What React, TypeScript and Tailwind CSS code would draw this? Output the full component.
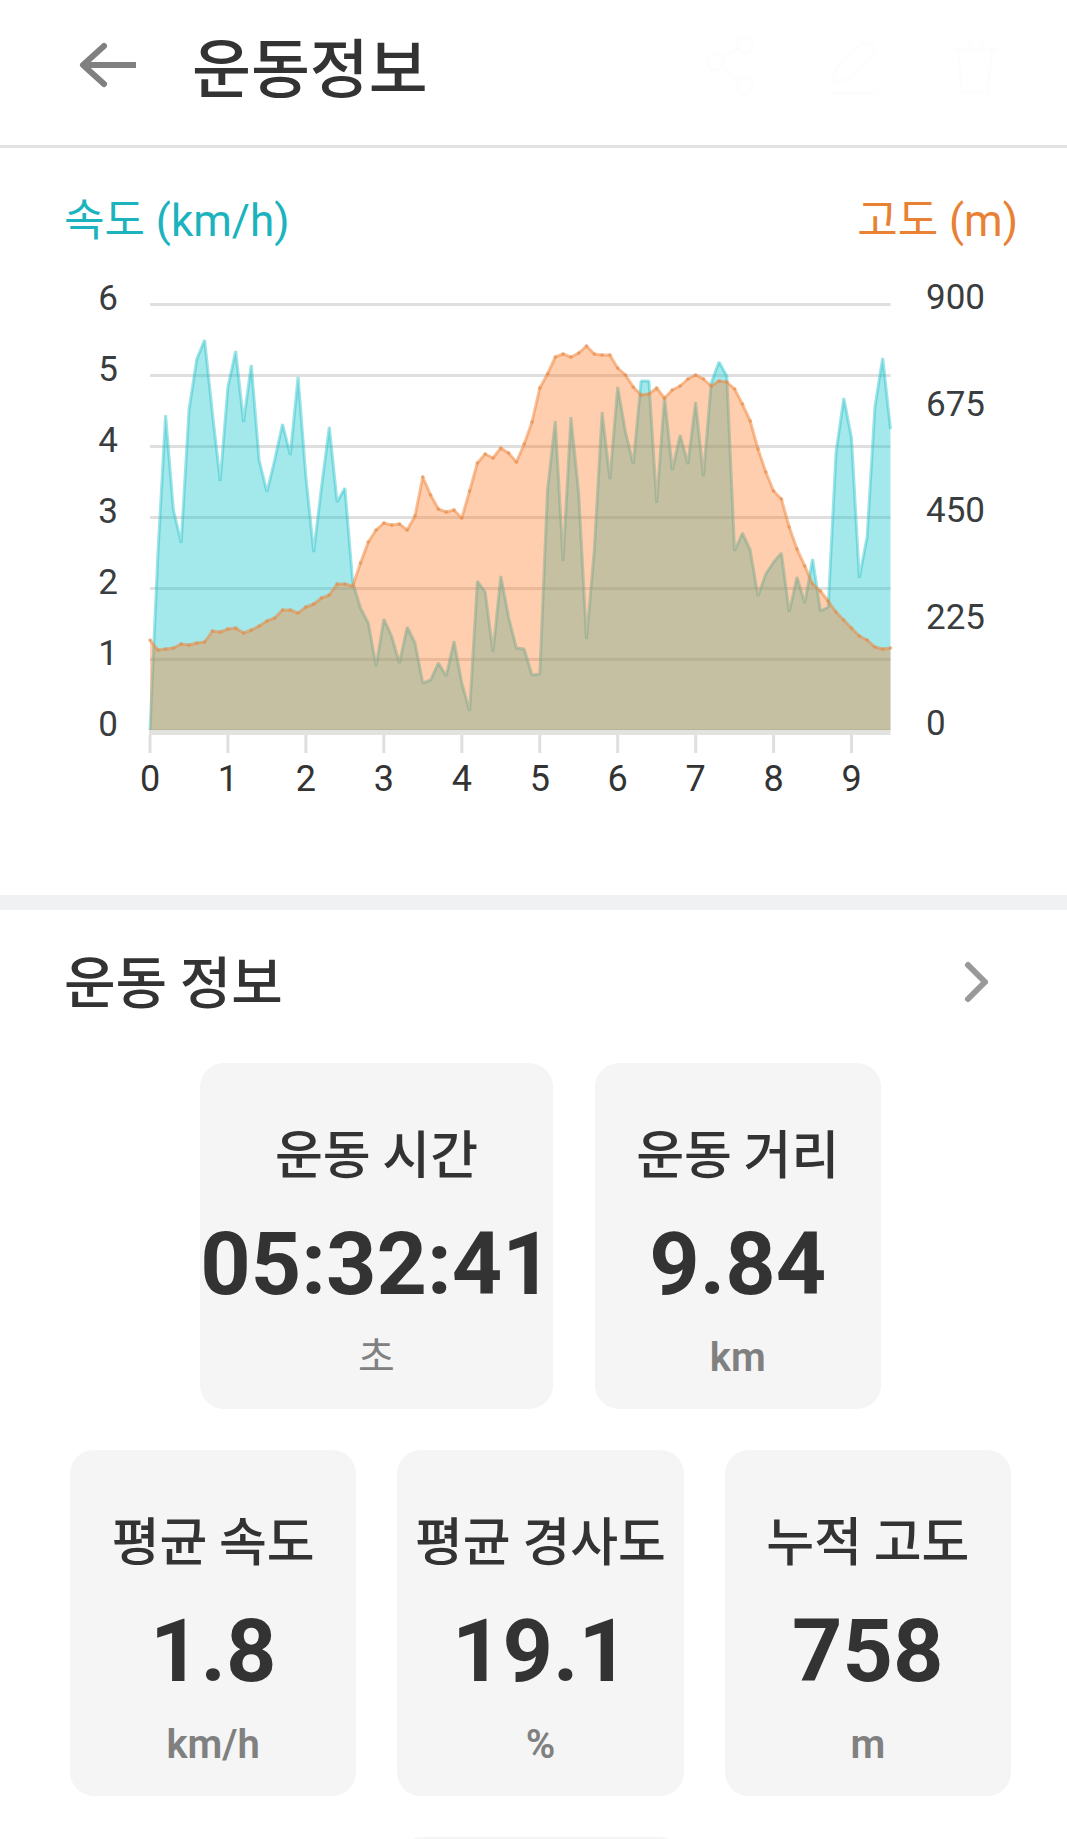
import type { ReactNode } from "react";

const X0 = 150;
const STEP = 7.795;
const BASE = 730;
const UNIT = 71;

// Vertical positions in chart units, one sample for every 100 m.
const speed = [
  730, 556, 415, 510, 543, 410, 359, 340, 413, 481, 387, 351, 422, 365, 460, 492, 460, 424, 455, 377,
  477, 552, 487, 427, 502, 488, 582, 608, 623, 666, 619, 636, 663, 627, 643, 683, 680, 663, 676, 641,
  683, 711, 581, 592, 652, 576, 617, 648, 649, 675, 674, 490, 421, 561, 417, 493, 639, 550, 412, 479,
  387, 432, 464, 381, 381, 503, 397, 470, 435, 464, 402, 476, 383, 362, 376, 551, 533, 550, 596, 574,
  562, 553, 612, 577, 603, 559, 611, 607, 453, 398, 438, 578, 537, 407, 358, 429,
];
const altitude = [
  640, 650, 649, 648, 644, 645, 643, 642, 631, 632, 629, 628, 633, 630, 626, 621, 618, 610, 610, 613,
  607, 604, 598, 595, 584, 584, 586, 563, 542, 530, 523, 525, 524, 530, 516, 477, 495, 509, 512, 510,
  518, 491, 463, 454, 458, 448, 453, 462, 444, 422, 388, 374, 357, 354, 357, 353, 346, 354, 355, 355,
  368, 375, 387, 395, 394, 388, 398, 390, 386, 379, 375, 379, 386, 381, 382, 389, 404, 421, 449, 472,
  491, 499, 527, 549, 566, 584, 591, 601, 612, 620, 628, 636, 640, 647, 649, 648,
];

const xAt = (i: number) => X0 + i * STEP;
const toPoints = (values: number[]) => values.map((y, i) => `${xAt(i).toFixed(1)},${y}`).join(" ");
const toArea = (values: number[]) =>
  `${X0},${BASE} ${toPoints(values)} ${xAt(values.length - 1).toFixed(1)},${BASE}`;

const END = xAt(speed.length - 1);

function Chart() {
  return (
    <svg
      viewBox="0 270 1067 540"
      className="block w-full font-[Roboto,sans-serif]"
      role="img"
      aria-label="속도와 고도 그래프"
    >
      {[1, 2, 3, 4, 5, 6].map((n) => (
        <rect key={n} x={X0} y={BASE - n * UNIT - 1} width={END - X0} height="3" fill="#dfdfdf" />
      ))}
      <rect x={X0 - 1} y="729" width={END - X0 + 1} height="6" fill="#e2e2e0" />
      {[0, 1, 2, 3, 4, 5, 6, 7, 8, 9].map((n) => (
        <rect key={n} x={xAt(n * 10) - 1.5} y="735" width="3" height="18" fill="#dfdfdf" />
      ))}
      <polygon points={toArea(speed)} fill="#0dc5cb" fillOpacity="0.38" />
      <polyline points={toPoints(speed)} fill="none" stroke="#1fbfc8" strokeOpacity="0.42" strokeWidth="3" strokeLinejoin="bevel" />
      <polygon points={toArea(altitude)} fill="#ff761e" fillOpacity="0.36" />
      <polyline points={toPoints(altitude)} fill="none" stroke="#f08437" strokeOpacity="0.5" strokeWidth="3" strokeLinejoin="round" />
      {altitude.map((y, i) => (
        <circle key={i} cx={xAt(i)} cy={y} r="1.8" fill="#e58a4a" fillOpacity="0.6" />
      ))}
      <g fill="#3a3d40" fontSize="35">
        {[0, 1, 2, 3, 4, 5, 6].map((n) => (
          <text key={n} x="108" y={736 - n * UNIT} textAnchor="middle">
            {n}
          </text>
        ))}
        {[0, 225, 450, 675, 900].map((n) => (
          <text key={n} x="926" y={735 - (n / 225) * 106.5}>
            {n}
          </text>
        ))}
      </g>
      <g fill="#333333" fontSize="36">
        {[0, 1, 2, 3, 4, 5, 6, 7, 8, 9].map((n) => (
          <text key={n} x={xAt(n * 10)} y="791" textAnchor="middle">
            {n}
          </text>
        ))}
      </g>
    </svg>
  );
}

function Stat({ label, value, unit }: { label: string; value: string; unit: string }) {
  return (
    <article className="flex h-[346px] min-w-[286px] flex-col items-center rounded-3xl bg-[#f5f5f5] pt-[53px] whitespace-nowrap">
      <h3 className="text-[52px] leading-[72px] font-medium text-[#333]">{label}</h3>
      <p className="mt-5 font-[Roboto,sans-serif] text-[88px] leading-[112px] font-bold text-[#333]">{value}</p>
      <p className="mt-2.5 font-[Roboto,'Noto_Sans_CJK_KR',sans-serif] text-[40px] leading-[56px] font-semibold text-[#808080]">
        {unit === "초" ? <span className="font-normal">{unit}</span> : unit}
      </p>
    </article>
  );
}

function IconButton({ label, children }: { label: string; children: ReactNode }) {
  return (
    <button type="button" aria-label={label} className="text-[#fdfdfd]">
      <svg viewBox="0 0 60 60" className="size-[60px]" fill="none" stroke="currentColor" strokeWidth="3" strokeLinecap="round" strokeLinejoin="round">
        {children}
      </svg>
    </button>
  );
}

export default function App() {
  return (
    <main className="h-screen overflow-hidden bg-white font-['Noto_Sans_CJK_KR',sans-serif] text-[#333]">
      <header className="flex h-[148px] items-start border-b-3 border-[#e2e2e2] pr-[60px] pl-[78px]">
        <button type="button" aria-label="뒤로" className="mt-[40px]">
          <svg viewBox="0 0 60 50" className="h-[50px] w-[60px]" fill="none" stroke="#808080" strokeWidth="6">
            <path d="M58 25H6" />
            <path d="M26 6 5 25l21 19" strokeLinecap="round" strokeLinejoin="round" />
          </svg>
        </button>
        <h1 className="mt-5 ml-[54px] text-[64px] leading-[88px] font-medium">운동정보</h1>
        <div className="mt-[36px] ml-auto flex gap-[62px]">
          <IconButton label="공유">
            <circle cx="42" cy="9" r="8" />
            <circle cx="12" cy="26" r="8" />
            <circle cx="42" cy="50" r="8" />
            <path d="m19 22 16-9M19 31l16 13" />
          </IconButton>
          <IconButton label="편집">
            <path d="M8 57h44M8 46l3-13L36 8q6-4 11 1t1 11L22 44Z" />
          </IconButton>
          <IconButton label="삭제">
            <path d="M5 13h46M11 13l4 43h26l4-43M21 12q0-8 8-8t8 8" />
          </IconButton>
        </div>
      </header>

      <section>
        <div className="flex h-[122px] items-center justify-between pt-6 pr-[49px] pl-[64px] font-[Roboto,'Noto_Sans_CJK_KR',sans-serif] text-[44px] leading-[64px]">
          <span className="text-[#1bb3bd]">속도 (km/h)</span>
          <span className="text-[#e98135]">고도 (m)</span>
        </div>
        <Chart />
      </section>

      <section className="mt-[85px] border-t-15 border-[#f0f1f2]">
        <div className="flex h-[153px] items-start justify-between pt-[29px] pr-[75px] pl-[64px]">
          <h2 className="text-[56px] leading-[80px] font-medium">운동 정보</h2>
          <button type="button" aria-label="운동 정보 더보기" className="mt-5">
            <svg viewBox="0 0 30 46" className="h-[46px] w-[30px]" fill="none" stroke="#999" strokeWidth="6" strokeLinecap="round" strokeLinejoin="round">
              <path d="m6 6 17 17L6 40" />
            </svg>
          </button>
        </div>
        <div className="flex flex-col gap-[41px] pr-[56px] pl-[70px]">
          <div className="flex justify-center gap-[42px]">
            <Stat label="운동 시간" value="05:32:41" unit="초" />
            <Stat label="운동 거리" value="9.84" unit="km" />
          </div>
          <div className="grid grid-cols-3 gap-[41px]">
            <Stat label="평균 속도" value="1.8" unit="km/h" />
            <Stat label="평균 경사도" value="19.1" unit="%" />
            <Stat label="누적 고도" value="758" unit="m" />
          </div>
          <div className="flex justify-center">
            <div className="h-[346px] w-[286px] rounded-3xl bg-[#f5f5f5]" />
          </div>
        </div>
      </section>
    </main>
  );
}
